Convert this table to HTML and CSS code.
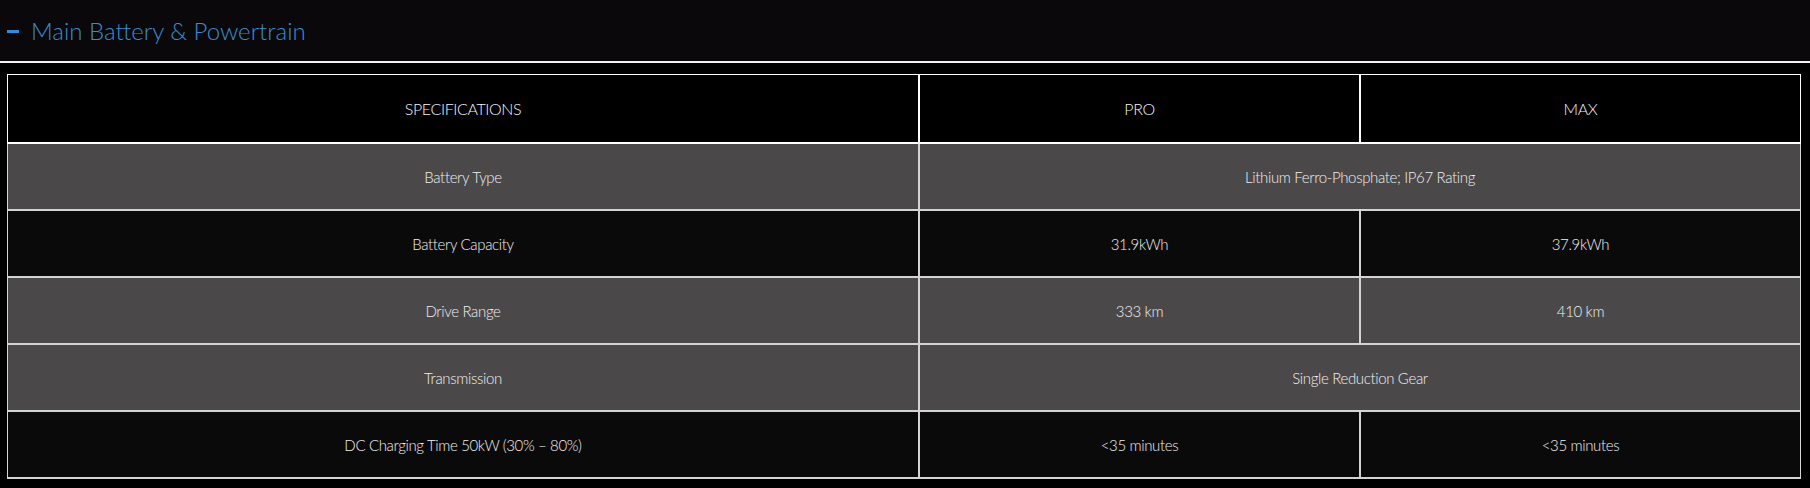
FILE: index.html
```html
<!DOCTYPE html>
<html lang="en">
<head>
<meta charset="utf-8">
<title>Main Battery &amp; Powertrain</title>
<link rel="stylesheet" href="styles.css">
</head>
<body>
  <header class="section-head">
    <span class="dash"></span>
    <h2 class="section-title">Main Battery &amp; Powertrain</h2>
  </header>
  <div class="rule"></div>
  <div class="table-wrap">
    <table class="spec-table">
      <thead>
        <tr>
          <th class="c1">SPECIFICATIONS</th>
          <th class="c2">PRO</th>
          <th class="c3">MAX</th>
        </tr>
      </thead>
      <tbody>
        <tr class="gray">
          <td class="c1">Battery Type</td>
          <td class="c3" colspan="2">Lithium Ferro-Phosphate; IP67 Rating</td>
        </tr>
        <tr class="dark">
          <td class="c1">Battery Capacity</td>
          <td class="c2">31.9kWh</td>
          <td class="c3">37.9kWh</td>
        </tr>
        <tr class="gray">
          <td class="c1">Drive Range</td>
          <td class="c2">333 km</td>
          <td class="c3">410 km</td>
        </tr>
        <tr class="gray">
          <td class="c1">Transmission</td>
          <td class="c3" colspan="2">Single Reduction Gear</td>
        </tr>
        <tr class="dark">
          <td class="c1">DC Charging Time 50kW (30% – 80%)</td>
          <td class="c2">&lt;35 minutes</td>
          <td class="c3">&lt;35 minutes</td>
        </tr>
      </tbody>
    </table>
  </div>
</body>
</html>
```

FILE: styles.css
```css
html, body {
  margin: 0;
  padding: 0;
  background: #000;
}

body {
  font-family: "Lato", "Liberation Sans", sans-serif;
  font-weight: 300;
  color: #f0f0f0;
}

.section-head {
  height: 61px;
  background: #0a080a;
  display: flex;
  align-items: center;
  padding-left: 7px;
  box-sizing: border-box;
}

.dash {
  width: 12px;
  height: 3px;
  background: #2b8ee0;
  margin-right: 12px;
  margin-top: 1px;
}

.section-title {
  margin: 0;
  font-size: 24px;
  font-weight: 300;
  color: #3a8cd0;
}

.rule {
  height: 2px;
  background: #f2f2f2;
}

.table-wrap {
  padding: 11px 0 0 7px;
}

.spec-table {
  border-collapse: separate;
  border-spacing: 0;
  table-layout: fixed;
}

.spec-table th,
.spec-table td {
  box-sizing: border-box;
  padding: 0;
  text-align: center;
  vertical-align: middle;
}

.spec-table th {
  height: 70px;
  background: #000;
  border-top: 1px solid #fff;
  border-right: 2px solid #fff;
  border-bottom: 2px solid #fff;
  font-size: 16px;
  letter-spacing: -0.4px;
  font-weight: 300;
  color: #f4f4f4;
}

.spec-table td {
  height: 67px;
  border-right: 2px solid #d4d4d4;
  border-bottom: 2px solid #d4d4d4;
  font-size: 15px;
  letter-spacing: -0.35px;
  color: #f0f0f0;
}

.spec-table .c1 {
  width: 913px;
  border-left: 1px solid #d4d4d4;
}

.spec-table th.c1 {
  border-left-color: #fff;
}

.spec-table .c2 {
  width: 441px;
}

.spec-table .c3 {
  width: 440px;
  border-right-width: 1px;
}

.gray td {
  background: #4a4849;
}

.dark td {
  background: #0b0a0b;
}
```
